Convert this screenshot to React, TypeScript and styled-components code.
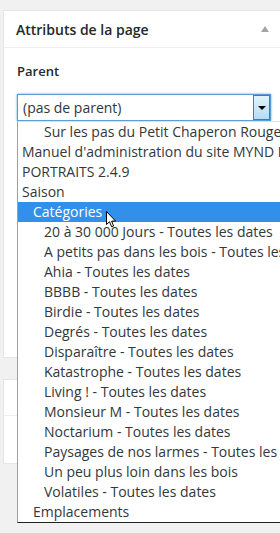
import styled, { createGlobalStyle } from "styled-components";

const GlobalStyle = createGlobalStyle`
  html {
    overflow: hidden;
    background: #f1f1f1;
  }

  body {
    margin: 0;
    min-height: 100vh;
    background: #f1f1f1;
    font-family: "Open Sans", "Liberation Sans", sans-serif;
    color: #32373c;
  }
`;

type Option = { label: string; level: number; active?: boolean };

const options: Option[] = [
  { label: "Sur les pas du Petit Chaperon Rouge", level: 2 },
  { label: "Manuel d'administration du site MYND Productions", level: 0 },
  { label: "PORTRAITS 2.4.9", level: 0 },
  { label: "Saison", level: 0 },
  { label: "Catégories", level: 1, active: true },
  { label: "20 à 30 000 Jours - Toutes les dates", level: 2 },
  { label: "A petits pas dans les bois - Toutes les dates", level: 2 },
  { label: "Ahia - Toutes les dates", level: 2 },
  { label: "BBBB - Toutes les dates", level: 2 },
  { label: "Birdie - Toutes les dates", level: 2 },
  { label: "Degrés - Toutes les dates", level: 2 },
  { label: "Disparaître - Toutes les dates", level: 2 },
  { label: "Katastrophe - Toutes les dates", level: 2 },
  { label: "Living ! - Toutes les dates", level: 2 },
  { label: "Monsieur M - Toutes les dates", level: 2 },
  { label: "Noctarium - Toutes les dates", level: 2 },
  { label: "Paysages de nos larmes - Toutes les dates", level: 2 },
  { label: "Un peu plus loin dans les bois", level: 2 },
  { label: "Volatiles - Toutes les dates", level: 2 },
  { label: "Emplacements", level: 1 },
];

export default function App() {
  return (
    <Page>
      <GlobalStyle />
      <Postbox>
        <Header>
          <Title>Attributs de la page</Title>
          <ToggleArrow />
        </Header>
        <Inside>
          <Label>Parent</Label>
          <SelectWrap>
            <SelectBox>
              <SelectValue>(pas de parent)</SelectValue>
              <DropButton>
                <DropTriangle />
              </DropButton>
            </SelectBox>
            <DropList>
              {options.map((o) => (
                <OptionRow key={o.label} $level={o.level} $active={o.active}>
                  {o.label}
                </OptionRow>
              ))}
            </DropList>
            <Cursor viewBox="0 0 12 17" width="12" height="17">
              <path
                d="M0.5 0.5 L0.5 13.5 L3.5 10.7 L5.6 15.8 L7.6 15 L5.6 10.1 L9.6 10.1 Z"
                fill="#fff"
                stroke="#000"
                strokeWidth="1"
                strokeLinejoin="miter"
              />
            </Cursor>
          </SelectWrap>
        </Inside>
      </Postbox>
      <SecondBox>
        <SecondHeader />
      </SecondBox>
    </Page>
  );
}

const Page = styled.div`
  display: flex;
  flex-direction: column;
  gap: 21px;

  padding: 10px 0 0 3px;
`;

const Postbox = styled.section`
  width: 290px;
  height: 348px;
  box-sizing: border-box;

  background: #fff;
  border: 1px solid #e5e5e5;
`;

const Header = styled.div`
  display: flex;
  align-items: center;
  justify-content: space-between;

  height: 36px;
  padding: 0 23px 0 12px;
  border-bottom: 1px solid #eee;
`;

const Title = styled.h2`
  margin: 0;

  font-size: 14px;
  font-weight: 600;
  line-height: 19px;
  color: #23282d;
`;

const ToggleArrow = styled.span`
  width: 0;
  height: 0;
  margin-top: -1px;

  border-left: 4px solid transparent;
  border-right: 4px solid transparent;
  border-bottom: 6px solid #a0a5aa;
`;

const Inside = styled.div`
  padding: 14px 12px 0 13px;
`;

const Label = styled.p`
  margin: 0 0 14px;

  font-size: 13px;
  font-weight: 600;
  line-height: 18px;
  color: #23282d;
`;

const SelectWrap = styled.div`
  position: relative;
`;

const SelectBox = styled.div`
  display: flex;
  align-items: stretch;
  justify-content: space-between;

  width: 254px;
  height: 27px;
  box-sizing: border-box;

  background: #fff;
  border: 1px solid #5b9dd9;
  box-shadow: 0 0 2px rgba(30, 140, 190, 0.8);
`;

const SelectValue = styled.span`
  padding-left: 5px;

  font-size: 14px;
  line-height: 25px;
  color: #32373c;
`;

const DropButton = styled.span`
  display: flex;
  align-items: center;
  justify-content: center;

  width: 17px;
  box-sizing: border-box;

  background: linear-gradient(#e3f3fc, #b5dcf5);
  border: 1px solid #3c7fb1;
`;

const DropTriangle = styled.span`
  width: 0;
  height: 0;

  border-left: 4px solid transparent;
  border-right: 4px solid transparent;
  border-top: 4px solid #000;
`;

const DropList = styled.ul`
  position: absolute;
  top: 27px;
  left: 0;

  width: 300px;
  margin: 0;
  padding: 0;
  list-style: none;

  background: #fff;
  border-left: 1px solid #a0a0a0;
  border-top: 1px solid #e0e0e0;
  border-bottom: 1px solid #222;
`;

const OptionRow = styled.li<{ $level: number; $active?: boolean }>`
  height: 20px;
  padding-left: ${({ $level }) => 4 + $level * 11}px;

  font-size: 14px;
  line-height: 20px;
  white-space: nowrap;
  color: ${({ $active }) => ($active ? "#fff" : "#32373c")};
  background: ${({ $active }) => ($active ? "#3390ea" : "transparent")};
`;

const Cursor = styled.svg`
  position: absolute;
  top: 117px;
  left: 89px;
`;

const SecondBox = styled.section`
  width: 290px;
  height: 85px;
  box-sizing: border-box;

  background: #fff;
  border: 1px solid #e5e5e5;
`;

const SecondHeader = styled.div`
  height: 35px;
  border-bottom: 1px solid #eee;
`;
